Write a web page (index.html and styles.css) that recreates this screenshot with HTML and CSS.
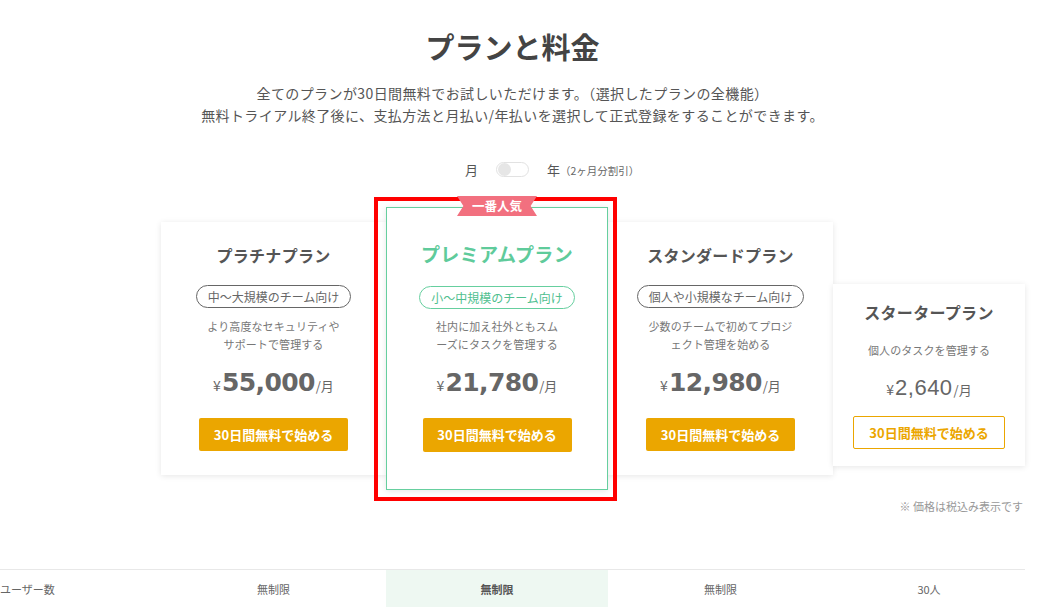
FILE: index.html
```html
<!DOCTYPE html>
<html lang="ja">
<head>
  <meta charset="UTF-8">
  <meta name="viewport" content="width=device-width, initial-scale=1.0">
  <title>プランと料金</title>
  <link rel="stylesheet" href="styles.css">
</head>
<body>
  <div class="page">
    <!-- Header -->
    <header class="intro">
      <h1 class="page-title">プランと料金</h1>
      <p class="lead">全てのプランが30日間無料でお試しいただけます。（選択したプランの全機能）<br>無料トライアル終了後に、支払方法と月払い/年払いを選択して正式登録をすることができます。</p>
      <div class="billing-toggle">
        <span class="term term-month">月</span>
        <span class="switch"><span class="knob"></span></span>
        <span class="term term-year">年<small class="discount">（2ヶ月分割引）</small></span>
      </div>
    </header>

    <!-- Plans -->
    <div class="plans">
      <div class="plan plan-platinum">
        <h2 class="plan-name">プラチナプラン</h2>
        <span class="plan-target">中〜大規模のチーム向け</span>
        <p class="plan-desc">より高度なセキュリティや<br>サポートで管理する</p>
        <p class="plan-price"><span class="yen">¥</span><span class="amount">55,000</span><span class="per">/月</span></p>
        <a class="plan-button" href="#">30日間無料で始める</a>
      </div>

      <div class="plan plan-premium">
        <span class="ribbon">一番人気</span>
        <h2 class="plan-name">プレミアムプラン</h2>
        <span class="plan-target">小〜中規模のチーム向け</span>
        <p class="plan-desc">社内に加え社外ともスム<br>ーズにタスクを管理する</p>
        <p class="plan-price"><span class="yen">¥</span><span class="amount">21,780</span><span class="per">/月</span></p>
        <a class="plan-button" href="#">30日間無料で始める</a>
      </div>

      <div class="plan plan-standard">
        <h2 class="plan-name">スタンダードプラン</h2>
        <span class="plan-target">個人や小規模なチーム向け</span>
        <p class="plan-desc">少数のチームで初めてプロジ<br>ェクト管理を始める</p>
        <p class="plan-price"><span class="yen">¥</span><span class="amount">12,980</span><span class="per">/月</span></p>
        <a class="plan-button" href="#">30日間無料で始める</a>
      </div>

      <div class="plan plan-starter">
        <h2 class="plan-name">スタータープラン</h2>
        <p class="plan-desc">個人のタスクを管理する</p>
        <p class="plan-price"><span class="yen">¥</span><span class="amount">2,640</span><span class="per">/月</span></p>
        <a class="plan-button plan-button-outline" href="#">30日間無料で始める</a>
      </div>
    </div>

    <p class="tax-note">※ 価格は税込み表示です</p>

    <!-- Comparison -->
    <div class="compare-row">
      <div class="compare-label">ユーザー数</div>
      <div class="compare-cell">無制限</div>
      <div class="compare-cell compare-featured">無制限</div>
      <div class="compare-cell">無制限</div>
      <div class="compare-cell">30人</div>
    </div>
  </div>
</body>
</html>
```

FILE: styles.css
```css
/* Global */
body {
  margin: 0;
  background: #fff;
  font-family: "Noto Sans CJK JP", "Noto Sans", sans-serif;
  color: #555;
  overflow: hidden;
}

.page {
  width: 1025px;
}

/* Header */
.intro {
  padding-top: 26px;
  text-align: center;
}

.page-title {
  margin: 0;
  font-size: 29px;
  line-height: 40px;
  font-weight: 700;
  color: #444;
}

.lead {
  margin: 16px 0 0;
  font-size: 14px;
  line-height: 22px;
  letter-spacing: 0.4px;
  color: #555;
}

.billing-toggle {
  margin-top: 33px;
  display: grid;
  grid-template-columns: 1fr auto 1fr;
  column-gap: 18px;
  align-items: center;
  height: 20px;
}

.term {
  font-size: 13px;
  color: #555;
}

.term-month {
  justify-self: end;
}

.term-year {
  justify-self: start;
}

.discount {
  font-size: 10.5px;
  color: #666;
}

.switch {
  width: 29px;
  height: 13px;
  border: 1px solid #e2e2e2;
  border-radius: 8px;
  display: flex;
  align-items: center;
  padding: 0 1px;
}

.knob {
  width: 13px;
  height: 13px;
  border-radius: 50%;
  background: #e6e6e6;
}

/* Plans */
.plans {
  margin-top: 28px;
  padding-left: 161px;
  display: grid;
  grid-template-columns: 225px 222px 225px 192px;
  align-items: start;
}

.plan {
  background: #fff;
  display: flex;
  flex-direction: column;
  align-items: center;
  text-align: center;
  box-shadow: 0 1px 6px rgba(0, 0, 0, 0.1);
  padding: 21px 0 24px;
  margin-top: 15px;
}

.plan-name {
  margin: 0;
  font-size: 16px;
  line-height: 24px;
  font-weight: 700;
  color: #555;
  letter-spacing: 0.3px;
}

.plan-target {
  margin-top: 18px;
  height: 21px;
  line-height: 21px;
  padding: 0 11px;
  border: 1px solid #666;
  border-radius: 12px;
  font-size: 12px;
  color: #666;
}

.plan-desc {
  margin: 10px 0 0;
  font-size: 11px;
  line-height: 17.5px;
  letter-spacing: 0.1px;
  color: #777;
}

.plan-price {
  margin: 12px 0 0;
  line-height: 36px;
  color: #666;
  white-space: nowrap;
}

.yen {
  font-size: 14px;
  margin-right: 1px;
}

.amount {
  font-family: "DejaVu Sans", sans-serif;
  font-size: 25px;
  font-weight: 700;
  letter-spacing: -0.6px;
}

.per {
  font-size: 13px;
  margin-left: 1px;
}

.plan-button {
  margin-top: 14px;
  width: 149px;
  height: 33px;
  line-height: 33px;
  border-radius: 2px;
  background: #eba600;
  color: #fff;
  font-size: 13px;
  font-weight: 700;
  text-decoration: none;
}

.plan-button-outline {
  box-sizing: border-box;
  width: 152px;
  line-height: 31px;
  background: #fff;
  border: 1px solid #eba600;
  color: #eba600;
}

/* Premium highlight */
.plan-premium {
  position: relative;
  z-index: 1;
  margin-top: 0;
  padding: 33px 0 37px;
  border: 1px solid #66cf9f;
}

.plan-premium::before {
  content: "";
  position: absolute;
  top: -11px;
  left: -13px;
  right: -10px;
  bottom: -12px;
  border: 4px solid #ff0000;
  z-index: 1;
}

.plan-premium .plan-name {
  font-size: 19px;
  line-height: 26px;
  color: #5fcb9b;
}

.plan-premium .plan-target {
  margin-top: 19px;
  border-color: #66cf9f;
  color: #4fc08f;
}

.plan-premium .plan-desc {
  margin-top: 9px;
}

.plan-premium .plan-button {
  height: 34px;
  line-height: 34px;
}

.ribbon {
  position: absolute;
  top: -12px;
  left: 50%;
  transform: translateX(-50%);
  z-index: 2;
  width: 80px;
  height: 20px;
  line-height: 20px;
  background: #f2707f;
  color: #fff;
  font-size: 12.5px;
  font-weight: 700;
  clip-path: polygon(0 0, 100% 0, 92% 50%, 100% 100%, 0 100%, 8% 50%);
}

.plan-starter {
  margin-top: 77px;
  padding: 16px 0 17px;
}

.plan-starter .plan-desc {
  margin-top: 17px;
  line-height: 18px;
}

.plan-starter .plan-price {
  margin-top: 14px;
  line-height: 30px;
}

.plan-starter .amount {
  font-family: "Liberation Sans", sans-serif;
  font-size: 22px;
  font-weight: 400;
  letter-spacing: 0.5px;
}

.plan-starter .plan-button {
  margin-top: 11px;
}

/* Footnote */
.tax-note {
  margin: 8px 2px 0 0;
  text-align: right;
  font-size: 11px;
  line-height: 16px;
  color: #999;
}

/* Comparison */
.compare-row {
  margin-top: 55px;
  border-top: 1px solid #e8e8e8;
  display: grid;
  grid-template-columns: 161px 225px 222px 225px 192px;
  height: 40px;
  font-size: 11px;
  color: #666;
}

.compare-label,
.compare-cell {
  display: flex;
  align-items: center;
  padding-bottom: 2px;
}

.compare-cell {
  justify-content: center;
}

.compare-featured {
  background: #eef8f2;
  font-weight: 700;
  color: #555;
}
```
